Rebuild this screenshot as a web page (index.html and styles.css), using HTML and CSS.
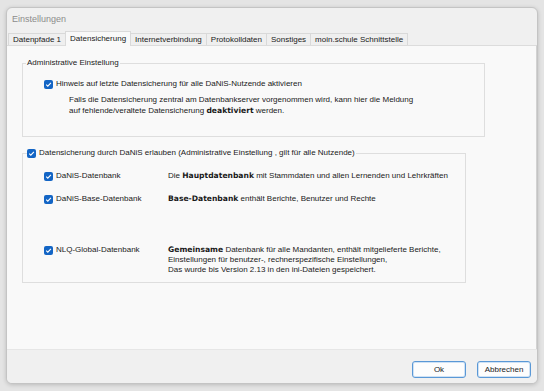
FILE: index.html
```html
<!DOCTYPE html>
<html lang="de">
<head>
<meta charset="utf-8">
<title>Einstellungen</title>
<link rel="stylesheet" href="styles.css">
</head>
<body>
<div class="window">
  <div class="titlebar">Einstellungen</div>
  <div class="tabs">
    <div class="tab">Datenpfade 1</div>
    <div class="tab active">Datensicherung</div>
    <div class="tab">Internetverbindung</div>
    <div class="tab">Protokolldaten</div>
    <div class="tab">Sonstiges</div>
    <div class="tab">moin.schule Schnittstelle</div>
  </div>
  <div class="panel">
    <fieldset class="group g1">
      <legend class="legend">Administrative Einstellung</legend>
      <div class="g1-body">
        <div class="check-row">
          <span class="cb"><svg viewBox="0 0 9 9"><path d="M2.2 4.7 L3.8 6.2 L6.9 2.9" fill="none" stroke="#fff" stroke-width="1.1"/></svg></span>
          <span>Hinweis auf letzte Datensicherung für alle DaNiS-Nutzende aktivieren</span>
        </div>
        <p class="hint">Falls die Datensicherung zentral am Datenbankserver vorgenommen wird, kann hier die Meldung<br>auf fehlende/veraltete Datensicherung <b>deaktiviert</b> werden.</p>
      </div>
    </fieldset>
    <fieldset class="group g2">
      <legend class="legend check-legend">
        <span class="cb"><svg viewBox="0 0 9 9"><path d="M2.2 4.7 L3.8 6.2 L6.9 2.9" fill="none" stroke="#fff" stroke-width="1.1"/></svg></span>
        <span>Datensicherung durch DaNiS erlauben (Administrative Einstellung , gilt für alle Nutzende)</span>
      </legend>
      <div class="db-grid">
        <div class="check-row">
          <span class="cb"><svg viewBox="0 0 9 9"><path d="M2.2 4.7 L3.8 6.2 L6.9 2.9" fill="none" stroke="#fff" stroke-width="1.1"/></svg></span>
          <span>DaNiS-Datenbank</span>
        </div>
        <div class="desc">Die <b>Hauptdatenbank</b> mit Stammdaten und allen Lernenden und Lehrkräften</div>
        <div class="check-row">
          <span class="cb"><svg viewBox="0 0 9 9"><path d="M2.2 4.7 L3.8 6.2 L6.9 2.9" fill="none" stroke="#fff" stroke-width="1.1"/></svg></span>
          <span>DaNiS-Base-Datenbank</span>
        </div>
        <div class="desc"><b>Base-Datenbank</b> enthält Berichte, Benutzer und Rechte</div>
        <div class="check-row spaced">
          <span class="cb"><svg viewBox="0 0 9 9"><path d="M2.2 4.7 L3.8 6.2 L6.9 2.9" fill="none" stroke="#fff" stroke-width="1.1"/></svg></span>
          <span>NLQ-Global-Datenbank</span>
        </div>
        <div class="desc spaced"><b>Gemeinsame</b> Datenbank für alle Mandanten, enthält mitgelieferte Berichte,<br>Einstellungen für benutzer-, rechnerspezifische Einstellungen,<br>Das wurde bis Version 2.13 in den ini-Dateien gespeichert.</div>
      </div>
    </fieldset>
  </div>
  <div class="footer">
    <button class="btn">Ok</button>
    <button class="btn">Abbrechen</button>
  </div>
</div>
</body>
</html>
```

FILE: styles.css
```css
html, body {
  margin: 0;
  padding: 0;
}
body {
  background: #e4e4e4;
  width: 544px;
  height: 391px;
  overflow: hidden;
  font-family: "Liberation Sans", Arial, sans-serif;
  font-size: 8px;
  color: #1a1a1a;
}
.window {
  margin: 7px 0 0 6px;
  width: 532px;
  height: 377px;
  box-sizing: border-box;
  border: 1px solid #c4c4c4;
  border-radius: 6px;
  background: #f0f0f0;
  box-shadow: 0 1px 4px rgba(0,0,0,0.18);
  overflow: hidden;
  display: flex;
  flex-direction: column;
}
.titlebar {
  height: 22px;
  padding-left: 5px;
  display: flex;
  align-items: center;
  font-size: 9px;
  color: #8c8c8c;
  flex: none;
}
.tabs {
  display: flex;
  align-items: flex-end;
  height: 15px;
  padding-left: 1px;
  flex: none;
  position: relative;
  z-index: 1;
}
.tab {
  height: 12px;
  box-sizing: border-box;
  padding: 0 4px;
  border: 1px solid #d9d9d9;
  border-bottom: none;
  margin-right: -1px;
  background: #efefef;
  display: flex;
  align-items: center;
  white-space: nowrap;
  color: #202020;
}
.tab.active {
  height: 15px;
  margin-bottom: -1px;
  background: #f9f9f9;
  padding: 0 4px 2px;
  border-color: #dadada;
}
.panel {
  flex: none;
  height: 304px;
  box-sizing: border-box;
  background: #f9f9f9;
  border-top: 1px solid #dcdcdc;
  border-right: 1px solid #d2d2d2;
  padding: 12px 0 0 15px;
}
.group {
  margin: 0;
  padding: 0;
  border: 1px solid #dedede;
  box-sizing: border-box;
  min-width: 0;
}
.legend {
  margin-left: 3px;
  padding: 0 1px;
  line-height: 10px;
  color: #1a1a1a;
}
.g1 {
  width: 463px;
}
.g1-body {
  padding: 11px 0 20px 21px;
}
.check-row {
  display: flex;
  align-items: center;
  gap: 3px;
  line-height: 10px;
  white-space: nowrap;
}
.cb {
  width: 9px;
  height: 9px;
  border-radius: 2px;
  background: #1365c5;
  display: inline-flex;
  flex: none;
}
.cb svg {
  width: 9px;
  height: 9px;
  display: block;
}
.hint {
  margin: 5px 0 0 25px;
  line-height: 11px;
}
b {
  font-family: "DejaVu Sans", Verdana, sans-serif;
  font-weight: bold;
  font-size: 7.6px;
}
.g2 {
  width: 444px;
  margin-top: 11px;
}
.check-legend {
  display: flex;
  align-items: center;
  gap: 3px;
  margin-left: 4px;
  padding: 0 1px 0 0;
  white-space: nowrap;
}
.db-grid {
  display: grid;
  grid-template-columns: 124px 1fr;
  row-gap: 13px;
  align-items: start;
  padding: 13px 0 7px 21px;
}
.desc {
  line-height: 10px;
  white-space: nowrap;
}
.spaced {
  margin-top: 28px;
}
.footer {
  flex: 1;
  display: flex;
  justify-content: flex-end;
  align-items: flex-start;
  gap: 11px;
  padding: 11px 6px 0 0;
  background: #f0f0f0;
  border-top: 1px solid #e6e6e6;
}
.btn {
  width: 54px;
  height: 17px;
  box-sizing: border-box;
  border: 1px solid #5a98d6;
  border-radius: 3px;
  background: #fdfdfd;
  font-family: "Liberation Sans", Arial, sans-serif;
  font-size: 8px;
  color: #1a1a1a;
  padding: 0;
  box-shadow: inset 0 0 0 1px #cfe2f5;
}
```
